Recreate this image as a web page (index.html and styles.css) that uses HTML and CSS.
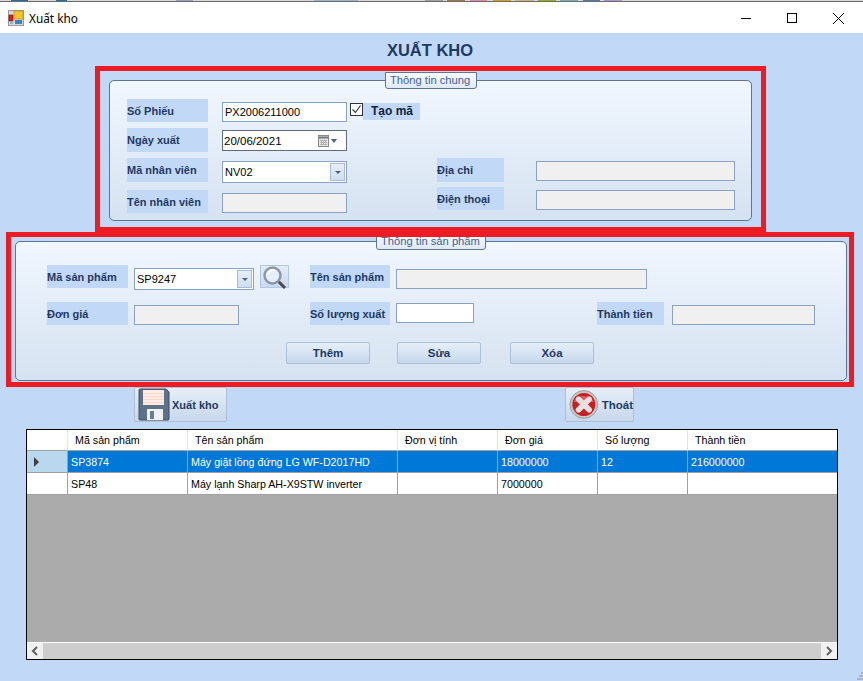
FILE: index.html
```html
<!DOCTYPE html>
<html>
<head>
  <meta charset="utf-8" />
  <title>Xuất kho</title>
  <link rel="stylesheet" href="styles.css">
</head>
<body>
  <div class="strip"></div>
  <div class="titlebar">
    <svg class="app-icon" width="16" height="16" viewBox="0 0 16 16">
      <rect x="0.5" y="0.5" width="15" height="15" fill="#d8d8d8" stroke="#9a9a9a"/>
      <rect x="6" y="1" width="9" height="8" fill="#f2c230" stroke="#b98a10" stroke-width="0.6"/>
      <rect x="1" y="5" width="4" height="6" fill="#d42020" stroke="#801010" stroke-width="0.6"/>
      <rect x="7" y="10" width="7" height="4" fill="#3f7fd0"/>
      <rect x="2" y="12" width="3" height="2" fill="#8fb4e0"/>
    </svg>
    <span class="titlebar-text">Xuất kho</span>
    <div class="win-buttons">
      <svg width="46" height="31" viewBox="0 0 46 31"><path d="M18 16.5h10" stroke="#000" fill="none"/></svg>
      <svg width="46" height="31" viewBox="0 0 46 31"><rect x="18.5" y="11.5" width="9" height="9" stroke="#000" fill="none"/></svg>
      <svg width="46" height="31" viewBox="0 0 46 31"><path d="M18 11l11 11M29 11L18 22" stroke="#000" fill="none"/></svg>
    </div>
  </div>

  <h1 class="heading">XUẤT KHO</h1>

  <div class="red-box box-chung">
    <div class="panel panel-chung">
      <div class="legend legend-chung">Thông tin chung</div>
      <div class="chung-left">
        <label class="lbl">Số Phiếu</label>
        <input class="txt" value="PX2006211000">
        <div class="tao-ma">
          <svg width="13" height="13" viewBox="0 0 13 13">
            <rect x="0.5" y="0.5" width="12" height="12" fill="#fff" stroke="#333"/>
            <path d="M2.5 6.5l3 3 5-7" stroke="#333" stroke-width="1.1" fill="none"/>
          </svg>
          <span class="tao-ma-text">Tạo mã</span>
        </div>

        <label class="lbl lbl-tall">Ngày xuất</label>
        <div class="txt date-box">
          <span>20/06/2021</span>
          <svg class="cal" width="13" height="14" viewBox="0 0 13 14">
            <rect x="1.5" y="1.5" width="10" height="11" fill="#e4e4e4" stroke="#8a8a8a"/>
            <path d="M2 3.5h9" stroke="#777" stroke-width="2"/>
            <path d="M3 6.5h7M3 8.5h7M3 10.5h7M4.5 6v5M6.5 6v5M8.5 6v5" stroke="#a8a8a8" stroke-width="0.7"/>
          </svg>
          <span class="arrow"></span>
        </div>
        <span></span>

        <label class="lbl lbl-tall">Mã nhân viên</label>
        <div class="txt combo combo-nv">
          <span>NV02</span>
          <span class="combo-btn"><span class="arrow"></span></span>
        </div>
        <span></span>

        <label class="lbl">Tên nhân viên</label>
        <input class="txt txt-off" disabled>
      </div>

      <div class="chung-right">
        <label class="lbl lbl-tall">Địa chỉ</label>
        <input class="txt txt-off" disabled>
        <label class="lbl">Điện thoại</label>
        <input class="txt txt-off" disabled>
      </div>
    </div>
  </div>

  <div class="red-box box-sp">
    <div class="panel panel-sp">
      <div class="legend legend-sp">Thông tin sản phẩm</div>
      <div class="sp-grid">
        <label class="lbl">Mã sản phẩm</label>
        <div class="sp-ma">
          <div class="txt combo combo-sp">
            <span>SP9247</span>
            <span class="combo-btn"><span class="arrow"></span></span>
          </div>
          <button class="search-btn">
            <svg width="27" height="23" viewBox="0 0 27 23">
              <path d="M17 15l7 7" stroke="#4a4a4a" stroke-width="3"/>
              <circle cx="11.500" cy="9.500" r="8" fill="#e6eef9" stroke="#8b98a8" stroke-width="2.500"/>
              <path d="M7 8c1-3 4-4.500 7-4" stroke="#fff" stroke-width="2" fill="none"/>
            </svg>
          </button>
        </div>
        <label class="lbl">Tên sản phẩm</label>
        <input class="txt txt-off txt-ten" disabled>

        <label class="lbl">Đơn giá</label>
        <input class="txt txt-off txt-gia" disabled>
        <label class="lbl">Số lượng xuất</label>
        <input class="txt txt-sl">
        <label class="lbl">Thành tiền</label>
        <input class="txt txt-off txt-tien" disabled>
      </div>
      <div class="btn-row">
        <button class="btn">Thêm</button>
        <button class="btn">Sửa</button>
        <button class="btn btn-xoa">Xóa</button>
      </div>
    </div>
  </div>

  <div class="actions">
    <button class="btn action-xuat">
      <svg width="32" height="33" viewBox="0 0 32 33">
        <path d="M2 1h26l3 3v27a1 1 0 0 1-1 1H2a1 1 0 0 1-1-1V2a1 1 0 0 1 1-1z" fill="#5d7188" stroke="#3f4f63"/>
        <rect x="5" y="2" width="21" height="15" fill="#fdebe4"/>
        <path d="M5 5.500h21M5 8.500h21M5 11.500h21M5 14.500h21" stroke="#fbd5c9"/>
        <rect x="9" y="21" width="16" height="11" fill="#eef1f5"/>
        <rect x="12" y="23" width="4" height="8" fill="#6c7d90"/>
      </svg>
      <span>Xuất kho</span>
    </button>
    <button class="btn action-thoat">
      <svg width="31" height="31" viewBox="0 0 31 31">
        <circle cx="15.500" cy="15.500" r="14.500" fill="#c9c9c9" stroke="#9c9c9c"/>
        <circle cx="15.500" cy="15.500" r="12" fill="#c81e24"/>
        <path d="M5 13a11 9 0 0 1 21 0z" fill="#e4585c"/>
        <path d="M10 10l11 11M21 10L10 21" stroke="#e6e0e0" stroke-width="6" stroke-linecap="round"/>
      </svg>
      <span>Thoát</span>
    </button>
  </div>

  <div class="grid-view">
    <table class="rows">
      <colgroup>
        <col class="c-head"><col class="c-ma"><col class="c-ten"><col class="c-dvt"><col class="c-gia"><col class="c-sl"><col class="c-tien">
      </colgroup>
      <thead>
        <tr>
          <th></th><th>Mã sản phẩm</th><th>Tên sản phẩm</th><th>Đơn vị tính</th><th>Đơn giá</th><th>Số lượng</th><th>Thành tiền</th>
        </tr>
      </thead>
      <tbody>
        <tr class="selected">
          <td class="row-head"><span class="row-mark"></span></td><td>SP3874</td><td>Máy giặt lồng đứng LG WF-D2017HD</td><td></td><td>18000000</td><td>12</td><td>216000000</td>
        </tr>
        <tr>
          <td class="row-head"></td><td>SP48</td><td>Máy lạnh Sharp AH-X9STW inverter</td><td></td><td>7000000</td><td></td><td></td>
        </tr>
      </tbody>
    </table>
    <div class="grid-empty"></div>
    <div class="hscroll">
      <svg width="16" height="16" viewBox="0 0 16 16"><path d="M10 4L6 8l4 4" stroke="#606060" stroke-width="2" fill="none"/></svg>
      <div class="hscroll-thumb"></div>
      <svg width="16" height="16" viewBox="0 0 16 16"><path d="M6 4l4 4-4 4" stroke="#606060" stroke-width="2" fill="none"/></svg>
    </div>
  </div>

  <svg class="grip" width="6" height="9" viewBox="0 0 6 9">
    <path d="M4 0h2v2H4zM2 3h2v2H2zM4 3h2v2H4zM0 6h2v2H0zM2 6h2v2H2zM4 6h2v2H4z" fill="#a9b4c4"/>
  </svg>
</body>
</html>
```

FILE: styles.css
```css
* {
  box-sizing: border-box;
}

html, body {
  margin: 0;
  height: 681px;
  overflow: hidden;
}

body {
  position: relative;
  width: 863px;
  background-color: #c2d8f7;
  font-family: "Liberation Sans", Arial, sans-serif;
  font-size: 11px;
  color: #000;
}

/* bit of the desktop behind the window */
.strip {
  height: 2px;
  border-bottom: 1px solid #6c6c6c;
  background: linear-gradient(to right,
    #d8d8d8 11px, #2a6aa0 11px, #2a6aa0 28px, #d8d8d8 28px,
    #d8d8d8 56px, #2a6aa0 56px, #2a6aa0 67px, #d8d8d8 67px,
    #d8d8d8 176px, #8fa3c0 176px, #8fa3c0 193px, #d8d8d8 193px,
    #d8d8d8 314px, #9ab4d0 314px, #9ab4d0 358px, #d8d8d8 358px,
    #d8d8d8 425px, #a0a0a0 425px, #a0a0a0 443px, #d8d8d8 443px,
    #d8d8d8 447px, #a8704c 447px, #a8704c 465px, #d8d8d8 465px,
    #d8d8d8 470px, #d88aa8 470px, #d88aa8 487px, #d8d8d8 487px,
    #d8d8d8 493px, #d8a010 493px, #d8a010 511px, #d8d8d8 511px,
    #d8d8d8 515px, #c8b880 515px, #c8b880 534px, #d8d8d8 534px,
    #d8d8d8 538px, #90b020 538px, #90b020 556px, #d8d8d8 556px,
    #d8d8d8 560px, #70b0c0 560px, #70b0c0 578px, #d8d8d8 578px,
    #d8d8d8 583px, #5878a0 583px, #5878a0 600px, #d8d8d8 600px,
    #d8d8d8 604px, #a898c8 604px, #a898c8 622px, #d8d8d8 622px);
}

.titlebar {
  height: 31px;
  background-color: #fff;
  display: flex;
  align-items: center;
  padding-left: 8px;
}

.app-icon {
  margin-right: 5px;
}

.titlebar-text {
  font-family: "Noto Sans", sans-serif;
  font-size: 11.800px;
}

.win-buttons {
  margin-left: auto;
  display: flex;
  padding-right: 2px;
}

.heading {
  margin: 0;
  height: 33px;
  padding-right: 3px;
  text-align: center;
  line-height: 34px;
  font-size: 16.5px;
  font-weight: bold;
  color: #1f3a63;
}

.red-box {
  border: 5px solid #ed1c24;
  overflow: hidden;
}

.box-chung {
  margin-left: 95px;
  width: 671px;
  height: 166px;
  padding: 9px 9px 0 9px;
}

.box-sp {
  margin-left: 6px;
  width: 848px;
  height: 155px;
  padding: 4px 2px 0 4px;
}

.panel {
  position: relative;
  border: 1px solid #5f7690;
  border-radius: 5px;
  background: linear-gradient(to bottom, #f1f7ff, #d5e2f1);
}

.panel-chung {
  width: 643px;
  height: 141px;
  padding: 18px 0 0 17px;
  display: flex;
}

.panel-sp {
  width: 832px;
  height: 140px;
  padding: 23px 0 0 31px;
}

.legend {
  position: absolute;
  top: -9px;
  height: 17px;
  padding: 0 4px;
  border: 1px solid #5f7690;
  border-radius: 0 0 3px 3px;
  background: linear-gradient(to bottom, #f7faff, #dfe9f6);
  color: #3f6496;
  font-size: 11.200px;
  line-height: 15px;
  white-space: nowrap;
}

.legend-chung {
  left: 275px;
  width: 92px;
}

.legend-sp {
  left: 360px;
  width: 110px;
}

.lbl {
  background-color: #c2d8f7;
  color: #1f3a63;
  font-weight: bold;
  height: 23px;
  line-height: 24px;
  white-space: nowrap;
}

.lbl-tall {
  height: 24px;
}

.txt {
  display: block;
  width: 100%;
  height: 20px;
  margin-top: 3px;
  padding: 0 2px;
  border: 1px solid #8aa3c4;
  border-radius: 0;
  background-color: #fff;
  font-family: "Liberation Sans", Arial, sans-serif;
  font-size: 11px;
  color: #000;
}

.txt-off {
  background-color: #f0f0f0;
}

.chung-left {
  width: 310px;
  display: grid;
  grid-template-columns: 81px 125px 70px;
  column-gap: 14px;
  grid-template-rows: 29px 30px 32px 23px;
  align-items: start;
}

.chung-left .lbl {
  width: 81px;
}

.chung-left .tao-ma {
  margin-left: -11px;
}

.tao-ma {
  display: flex;
  align-items: flex-start;
  margin-top: 4px;
  width: 70px;
  height: 17px;
}

.tao-ma svg {
  flex: none;
}

.tao-ma-text {
  flex: 1;
  height: 17px;
  padding-left: 8px;
  background-color: #c2d8f7;
  font-weight: bold;
  color: #10233f;
  line-height: 16px;
  font-size: 12px;
}

.date-box {
  display: flex;
  align-items: center;
  height: 21px;
  margin-top: 2px;
  padding-left: 1px;
  border-color: #5f6c80;
  font-size: 11.500px;
}

.cal {
  margin-left: auto;
}

.date-box .arrow {
  margin: 0 7px 0 1px;
  border-left-width: 3.500px;
  border-right-width: 3.500px;
}

.arrow {
  display: block;
  width: 0;
  height: 0;
  border-left: 4px solid transparent;
  border-right: 4px solid transparent;
  border-top: 4px solid #4d6185;
}

.combo {
  display: flex;
  align-items: center;
  height: 22px;
  padding: 1px 1px 1px 2px;
  margin-top: 3px;
}

.combo-nv {
  height: 22px;
}

.combo-btn {
  margin-left: auto;
  width: 15px;
  height: 100%;
  display: flex;
  align-items: center;
  justify-content: center;
  border: 1px solid #a9bbd6;
  background: linear-gradient(to bottom, #e6eef8, #cfdeef);
}

.combo-btn .arrow {
  border-left-width: 3px;
  border-right-width: 3px;
  border-top-width: 3px;
}

.chung-right {
  margin-top: 59px;
  display: grid;
  grid-template-columns: 67px 199px;
  column-gap: 32px;
  grid-template-rows: 29px 23px;
  align-items: start;
}

.sp-grid {
  display: grid;
  grid-template-columns: 81px 170px 80px 195px 67px 145px;
  column-gap: 6px;
  grid-template-rows: 37px 23px;
  align-items: start;
}

.sp-grid .txt {
  width: auto;
}

.sp-ma {
  display: flex;
  align-items: flex-start;
  gap: 6px;
}

.sp-grid .combo-sp {
  width: 120px;
  flex: none;
}

.search-btn {
  width: 29px;
  height: 23px;
  padding: 0;
  border: 1px solid #b5c7de;
  background: linear-gradient(to bottom, #e4edf9, #c9daee);
  flex: none;
}

.search-btn svg {
  display: block;
}

.sp-grid .txt-ten {
  grid-column: 4 / 7;
  width: 251px;
  margin-top: 4px;
}

.sp-grid .txt-gia {
  width: 105px;
}

.sp-grid .txt-sl {
  width: 78px;
  margin-top: 1px;
}

.sp-grid .txt-tien {
  margin-top: 3px;
  margin-left: 2px;
}

.btn {
  border: 1px solid #aebfd6;
  border-radius: 2px;
  background: linear-gradient(to bottom, #e6eff9, #c6d8ec);
  font-family: "Liberation Sans", Arial, sans-serif;
  font-size: 11.500px;
  font-weight: bold;
  color: #1f3a63;
  padding: 0;
}

.btn-row {
  display: flex;
  gap: 27px;
  margin-top: 17px;
  padding-left: 239px;
}

.btn-row .btn {
  width: 84px;
  height: 22px;
}

.btn-row .btn-xoa {
  margin-left: 2px;
}

.actions {
  display: flex;
  padding-left: 134px;
  gap: 338px;
  height: 35px;
}

.actions .btn {
  display: flex;
  align-items: center;
  height: 35px;
}

.action-xuat {
  width: 93px;
  padding-left: 3px;
  gap: 2px;
  font-size: 11px;
}

.actions .action-thoat {
  width: 69px;
  padding-left: 3px;
  gap: 3px;
  font-size: 11.500px;
}

.actions .action-xuat {
  font-size: 11px;
}

.grid-view {
  margin: 7px 0 0 26px;
  width: 812px;
  height: 231px;
  border: 1px solid #000;
  display: flex;
  flex-direction: column;
  background-color: #ababab;
}

.rows {
  table-layout: fixed;
  border-collapse: separate;
  border-spacing: 0;
  width: 810px;
  font-size: 10.700px;
}

.c-head { width: 41px; }
.c-ma { width: 120px; }
.c-ten { width: 210px; }
.c-dvt { width: 100px; }
.c-gia { width: 100px; }
.c-sl { width: 90px; }
.c-tien { width: 149px; }

.rows th {
  height: 21px;
  padding: 0 0 0 7px;
  text-align: left;
  font-weight: normal;
  background-color: #fff;
  border-right: 1px solid #e3e3e3;
  border-bottom: 1px solid #a0a0a0;
}

.rows td {
  height: 22px;
  padding: 0 0 0 3px;
  background-color: #fff;
  border-right: 1px solid #a0a0a0;
  border-bottom: 1px solid #a0a0a0;
  white-space: nowrap;
}

.rows th:last-child, .rows td:last-child {
  border-right: 0;
}

.rows .selected td {
  background-color: #0078d7;
  color: #fff;
}

.rows .selected .row-head {
  background-color: #b9d8ef;
}

.row-mark {
  display: block;
  margin-left: 4px;
  width: 0;
  height: 0;
  border-top: 5px solid transparent;
  border-bottom: 5px solid transparent;
  border-left: 5px solid #404040;
}

.grid-empty {
  flex: 1;
}

.hscroll {
  height: 17px;
  border-top: 1px solid #fff;
  background-color: #f0f0f0;
  display: flex;
  align-items: center;
}

.hscroll-thumb {
  flex: 1;
  height: 16px;
  background-color: #cdcdcd;
}

.grip {
  position: absolute;
  right: 0;
  bottom: 0;
}
```
